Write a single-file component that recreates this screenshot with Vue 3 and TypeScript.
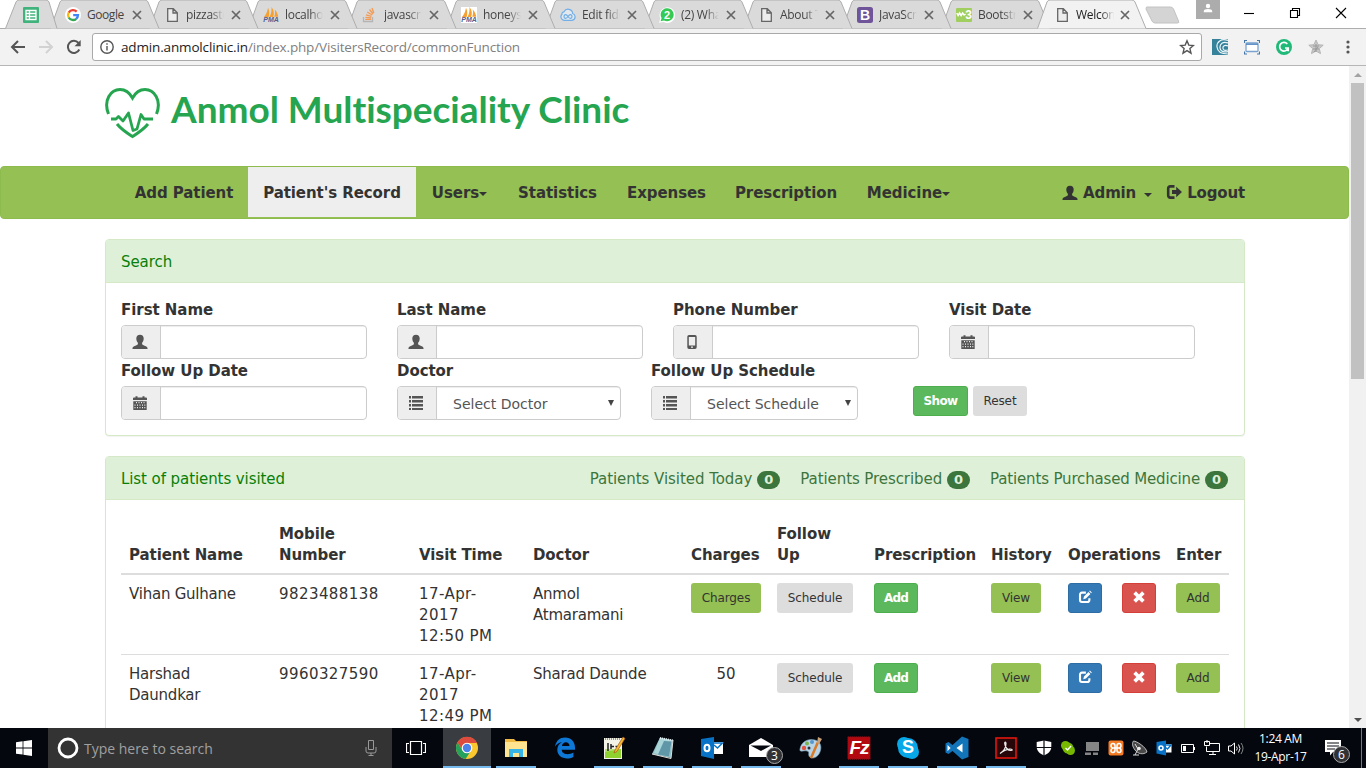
<script setup lang="ts">
interface Tab { icon: string; title: string; glyph?: string; kind?: 'pinned' | 'active' }
const tabs: Tab[] = [
  { icon: 'sheet', title: '', kind: 'pinned' },
  { icon: 'google', title: 'Google' },
  { icon: 'page', title: 'pizzasto' },
  { icon: 'pma', title: 'localhos', glyph: 'PMA' },
  { icon: 'stack', title: 'javascrip' },
  { icon: 'pmaw', title: 'honeysu', glyph: 'PMA' },
  { icon: 'cloud', title: 'Edit fidd' },
  { icon: 'whats', title: '(2) What', glyph: '2' },
  { icon: 'page', title: 'About Te' },
  { icon: 'boot', title: 'JavaScri', glyph: 'B' },
  { icon: 'w3', title: 'Bootstra', glyph: '3' },
  { icon: 'page', title: 'Welcome', kind: 'active' },
]
const extensions = ['swirl', 'frame', 'grammar', 'graystar', 'dots']

interface NavItem { label: string; key: string; caret?: boolean }
const nav: NavItem[] = [
  { label: 'Add Patient', key: 'add' },
  { label: "Patient's Record", key: 'record' },
  { label: 'Users', key: 'users', caret: true },
  { label: 'Statistics', key: 'stats' },
  { label: 'Expenses', key: 'expenses' },
  { label: 'Prescription', key: 'presc' },
  { label: 'Medicine', key: 'med', caret: true },
]

interface Field { label: string; icon: string; select?: string; key: string }
const fieldRows: Field[][] = [
  [
    { label: 'First Name', icon: 'user', key: 'first' },
    { label: 'Last Name', icon: 'user', key: 'last' },
    { label: 'Phone Number', icon: 'phone', key: 'phone' },
    { label: 'Visit Date', icon: 'calendar', key: 'visit' },
  ],
  [
    { label: 'Follow Up Date', icon: 'calendar', key: 'follow' },
    { label: 'Doctor', icon: 'list', select: 'Select Doctor', key: 'doctor' },
    { label: 'Follow Up Schedule', icon: 'list', select: 'Select Schedule', key: 'schedule' },
  ],
]
const counters = [
  { label: 'Patients Visited Today', value: 0 },
  { label: 'Patients Prescribed', value: 0 },
  { label: 'Patients Purchased Medicine', value: 0 },
]
const columns = [
  ['Patient Name'], ['Mobile', 'Number'], ['Visit Time'], ['Doctor'], ['Charges'],
  ['Follow', 'Up'], ['Prescription'], ['History'], ['Operations'], ['Enter'],
]
interface Row { name: string[]; mobile: string; time: string[]; doctor: string[]; charges: number | null }
const rows: Row[] = [
  { name: ['Vihan Gulhane'], mobile: '9823488138', time: ['17-Apr-', '2017', '12:50 PM'], doctor: ['Anmol', 'Atmaramani'], charges: null },
  { name: ['Harshad', 'Daundkar'], mobile: '9960327590', time: ['17-Apr-', '2017', '12:49 PM'], doctor: ['Sharad Daunde'], charges: 50 },
]
interface TaskApp { icon: string; state: string; glyph?: string }
const apps: TaskApp[] = [
  { icon: 'chrome', state: 'current' }, { icon: 'folder', state: 'open' }, { icon: 'edge', state: '' },
  { icon: 'npp', state: 'open' }, { icon: 'notepad', state: 'open' }, { icon: 'outlook', state: 'open' },
  { icon: 'mail', state: 'open' }, { icon: 'paint', state: '' }, { icon: 'filezilla', state: 'open', glyph: 'Fz' },
  { icon: 'skype', state: 'open', glyph: 'S' }, { icon: 'vscode', state: 'open' }, { icon: 'acrobat', state: 'open' },
]
const tray = ['shield', 'skypegreen', 'monitor', 'xampp', 'dish', 'outlooksm', 'battery', 'network', 'volume']
</script>

<template>
  <div class="screen">
    <svg class="defs" width="0" height="0">
      <symbol id="sheet" viewBox="0 0 16 16"><rect width="16" height="16" rx="1" fill="#3fb37b" /><path d="M3 3.500h10v9H3zM3 6.500h10M3 9.500h10M6.500 3.500v9" fill="none" stroke="#fff" stroke-width="1.300" /></symbol>
      <symbol id="google" viewBox="0 0 16 16"><circle cx="8" cy="8" r="8" fill="#fff" /><g fill="none" stroke-width="2.300"><path d="M11.700 4.600A5 5 0 0 0 3.700 5.600" stroke="#ea4335" /><path d="M3.700 5.500a5 5 0 0 0 0 5" stroke="#fbbc05" /><path d="M3.700 10.500a5 5 0 0 0 7.600 1.300" stroke="#34a853" /><path d="M8.200 8.100H13A5 5 0 0 1 11.200 11.800" stroke="#4285f4" /></g></symbol>
      <symbol id="page" viewBox="0 0 16 16"><path d="M3.700 1.700h5.600l4 4v8.600H3.700zM9 2v4h4" fill="#ededed" stroke="#666" stroke-width="1.300" /></symbol>
      <symbol id="sails" viewBox="0 0 16 16"><path d="M1 10C3.500 7 4.500 4 5 .8 6.500 4 6.600 7 5.600 10zM6.500 10C8.400 6.500 8.700 3.500 8.500 0 11 3.200 11.500 7 10 10zM11.200 9.800C12.300 7 12.300 5 11.700 2.500 14 5 15 7.500 15.200 9.800z" fill="#f5a030" /></symbol>
      <symbol id="pma" viewBox="0 0 16 16"><use href="#sails" /></symbol>
      <symbol id="pmaw" viewBox="0 0 16 16"><rect width="16" height="16" fill="#fff" /><use href="#sails" /></symbol>
      <symbol id="stack" viewBox="0 0 16 16"><path d="M1.500 10v4.500h9V10" fill="none" stroke="#b5b5b5" stroke-width="1.300" /><path d="M3.200 12.400h6M3.400 10.300l5.800.6M4 7.800l5.500 1.600M5.200 5l5 3M7.500 2.500l3.600 4.500M10 1l1.800 5" stroke="#f39a54" stroke-width="1.300" fill="none" /></symbol>
      <symbol id="cloud" viewBox="0 0 16 16"><path d="M4 13.300a3.500 3.500 0 0 1-2-6 2 2 0 0 1 2-2.500A4.600 4.600 0 0 1 12.700 6.500 3.500 3.500 0 0 1 12 13.300z" fill="#e4e8ec" stroke="#70afe8" stroke-width="1.200" /><path d="M8 9.500c-2-3-4-2-4 0s2 3 4 0 4-2 4 0-2 3-4 0z" fill="none" stroke="#70afe8" stroke-width="1.200" /></symbol>
      <symbol id="whats" viewBox="0 0 16 16"><path d="M0 15.800l1.300-4.300A7.800 7.800 0 1 1 4.600 15z" fill="#fff" /><path d="M1.600 14.300l1-3.200A6.500 6.500 0 1 1 5 13.400z" fill="#35ca55" /></symbol>
      <symbol id="boot" viewBox="0 0 16 16"><rect width="16" height="16" rx="2.500" fill="#6f5499" /></symbol>
      <symbol id="w3" viewBox="0 0 16 16"><rect y="1" width="16" height="14" rx="1" fill="#a1cf5f" /><path d="M.8 6l1.300 2.500L3.600 6l1.500 2.500L6.600 6l1.500 2 1.500-1" fill="none" stroke="#fff" stroke-width="1.500" /></symbol>
      <symbol id="swirl" viewBox="0 0 16 16"><rect width="16" height="16" fill="#35829a" /><path d="M16 1.500C9-1 4.500 3 5 8S10 15 16 15M16 4C11 2 7.500 5 8 9s5 4.500 8 3.500M16 7c-3-1.500-5.500 0-5 2.500s3 2 5 1.500" fill="none" stroke="#eef7fa" stroke-width="1.200" /></symbol>
      <symbol id="frame" viewBox="0 0 16 16"><rect x="2" y="4" width="12" height="8.500" rx="1" fill="#fff" stroke="#7aa3d0" stroke-width="1.300" /><path d="M2 5.200h12" stroke="#5c8fc4" stroke-width="1.500" /><path d="M.5 4V1.500H3M13 1.500h2.500V4M15.500 12.500V15H13M3 15H.5v-2.500" fill="none" stroke="#4777a8" stroke-width="1.200" /></symbol>
      <symbol id="grammar" viewBox="0 0 16 16"><circle cx="8" cy="8" r="8" fill="#21b978" /><path d="M11.300 5A4.300 4.300 0 1 0 12 9.200M12.200 12.200V9H9" fill="none" stroke="#fff" stroke-width="1.700" /></symbol>
      <symbol id="graystar" viewBox="0 0 16 16"><path d="M8 1l2.100 4.700 5.100.5-3.900 3.400 1.200 5L8 12l-4.500 2.600 1.200-5L.8 6.200l5.100-.5z" fill="#c8c8c8" stroke="#b5b5b5" /><path d="M5 7h6M8 5v8M5 10h6M6 13l4-5" stroke="#999" /></symbol>
      <symbol id="dots" viewBox="0 0 16 16"><circle cx="8" cy="3" r="1.600" fill="#555" /><circle cx="8" cy="8" r="1.600" fill="#555" /><circle cx="8" cy="13" r="1.600" fill="#555" /></symbol>

      <symbol id="user" viewBox="0 0 16 16"><path d="M8 .8c2.400 0 3.700 1.500 3.700 3.700 0 1.800-.7 3.500-1.600 4.200v1.400c0 .7 1 .9 2.500 1.600 1.800.8 2.900 1.400 2.900 2.300v1H.5v-1c0-.9 1.100-1.500 2.900-2.300C4.900 11 5.900 10.800 5.900 10.100V8.700C5 8 4.300 6.300 4.300 4.500 4.300 2.300 5.600.8 8 .8z" fill="currentColor" /></symbol>
      <symbol id="phone" viewBox="0 0 16 16"><path fill-rule="evenodd" d="M5 1h6a1.700 1.700 0 0 1 1.700 1.700v10.600A1.700 1.700 0 0 1 11 15H5a1.700 1.700 0 0 1-1.700-1.700V2.700A1.700 1.700 0 0 1 5 1zM4.800 3v8.500h6.400V3zM7 12.500v1.300h2v-1.300z" fill="currentColor" /></symbol>
      <symbol id="calendar" viewBox="0 0 16 16"><path fill-rule="evenodd" d="M2 2.500h1.500V1.300h2v1.200h5V1.300h2v1.200H14a1 1 0 0 1 1 1V5H1V3.500a1 1 0 0 1 1-1zM1.300 6.200h13.400V15H1.300zM4 7v1.300h1V7zm2.500 0v1.300h1V7zM9 7v1.300h1V7zm2.500 0v1.300h1V7zM2.500 9.500v1.300h1V9.500zM5 9.500v1.300h1V9.500zm2.500 0v1.300h1V9.500zm2.500 0v1.300h1V9.500zm2.300 0v1.300h1V9.500zM2.500 12v1.300h1V12zM5 12v1.300h1V12zm2.500 0v1.300h1V12zm2.500 0v1.300h1V12zm2.300 0v1.300h1V12z" fill="currentColor" /></symbol>
      <symbol id="list" viewBox="0 0 16 16"><path d="M1 1h2v2.500H1zM4 1h11v2.500H4zM1 5h2v2.500H1zM4 5h11v2.500H4zM1 9h2v2.500H1zM4 9h11v2.500H4zM1 13h2v2H1zM4 13h11v2H4z" fill="currentColor" /></symbol>
      <symbol id="logout" viewBox="0 0 16 16"><path d="M8.500 2.400H4.200A2 2 0 0 0 2.200 4.400v7.200a2 2 0 0 0 2 2h4.300" fill="none" stroke="currentColor" stroke-width="2.600" /><path d="M6 6h4.200V2.800L16 8l-5.800 5.200V10H6z" fill="currentColor" /></symbol>
      <symbol id="edit" viewBox="0 0 16 16"><path d="M9 3H4.500A2.200 2.200 0 0 0 2.300 5.200v6.300a2.200 2.200 0 0 0 2.200 2.200h6.300a2.200 2.200 0 0 0 2.200-2.200V9.500" fill="none" stroke="#fff" stroke-width="2.400" /><path d="M6 10.500l.8-3L12 2.300l2.200 2.200L9 9.700zM12.800 1.500l.8-.8 2.200 2.200-.8.8z" fill="#fff" /></symbol>
      <symbol id="remove" viewBox="0 0 16 16"><path d="M4.500 1.500L8 5l3.500-3.500 3 3L11 8l3.500 3.500-3 3L8 11l-3.500 3.500-3-3L5 8 1.500 4.500z" fill="#fff" /></symbol>

      <symbol id="chrome" viewBox="0 0 24 24"><circle cx="12" cy="12" r="11" fill="#fbc72e" /><path d="M2.500 6.400A11 11 0 0 1 22 7H12a5 5 0 0 0-4.300 7.500z" fill="#dd4b3e" /><path d="M2.500 6.400A11 11 0 0 0 10.500 22.900L15.500 15.500A5 5 0 0 1 7.600 14.400z" fill="#23a15d" /><circle cx="12" cy="12" r="5.300" fill="#fff" /><circle cx="12" cy="12" r="4.200" fill="#4a83ec" /></symbol>
      <symbol id="folder" viewBox="0 0 24 24"><path d="M1 3h9l2 2h11v16H1z" fill="#f0ba45" /><path d="M1 6h22v15H1z" fill="#fee391" /><path d="M5 21v-8h14v8h-4v-4H9v4z" fill="#36b4e5" /></symbol>
      <symbol id="edge" viewBox="0 0 24 24"><path d="M2 10.800C3 4.500 7 1.500 12 1.500c6.500 0 10 4.700 10 10v2.300H8.700c.2 5 7.300 5.500 11.700 2.700v4.400C13 24.500 4.500 21.500 4.300 14c-.1-4 2-6.600 4.500-7.800-1.500 0-4.500 1-6.800 4.600zM9 9.900h7.500C16.300 5 9.500 5.300 9 9.900z" fill="#0e78d6" /></symbol>
      <symbol id="npp" viewBox="0 0 24 24"><path d="M2 2h18v21H2z" fill="#f3f3e8" /><path d="M3 16l16-3v9H3z" fill="#8fd12f" /><path d="M3 13h16v9H3z" fill="#8fd12f" opacity=".6" /><path d="M3 3h16" stroke="#999" stroke-dasharray="1 1" stroke-width="2" /><path d="M6 7v8M9 8v5M9 10.500h3M13.500 10.500h2" stroke="#222" stroke-width="1.500" /><path d="M13 14l8-13 2 1.500-8 13-3 1.500z" fill="#f6b62e" stroke="#a65b18" stroke-width=".7" /></symbol>
      <symbol id="notepad" viewBox="0 0 24 24"><path d="M9 1.500l13 2.500-2 18L1 18z" fill="#8fbfc6" /><path d="M9 2l12 2.500-3 16L3 17z" fill="#a9d5d9" /><path d="M13 5l7.500.5-2.500 15L7 18.500z" fill="#5f97a8" /><path d="M9 2l13 2.500" stroke="#e0eff1" stroke-width="2" stroke-dasharray="1 1" /><path d="M1 18l19 4.500L22 4" fill="none" stroke="#dedede" /></symbol>
      <symbol id="outlook" viewBox="0 0 24 24"><path d="M10 6h13v12H10z" fill="#fff" /><path d="M1 3l13-2v22L1 20z" fill="#0872c6" /><path d="M14 7h8.500l-5 5-3.500-3" fill="none" stroke="#0872c6" stroke-width="1.500" /><ellipse cx="7" cy="12" rx="2.500" ry="3.300" fill="none" stroke="#fff" stroke-width="2" /></symbol>
      <symbol id="mail" viewBox="0 0 24 24"><path d="M0 9L12 2l12 7v12H0z" fill="#fff" /><path d="M1.500 9.500H22L12 15z" fill="#05080f" /><path d="M12 15l12 4v2H0z" fill="#fff" /></symbol>
      <symbol id="paint" viewBox="0 0 24 24"><path d="M2 13C3 6 10 2 17 4s7 9 4 14-9 5-10 2 1-4-2-5-8 2-7-2z" fill="#b8d4e6" stroke="#789db5" stroke-width=".6" /><circle cx="6" cy="12" r="2.200" fill="#df5340" /><circle cx="9" cy="7.500" r="2" fill="#7cb34c" /><circle cx="14" cy="6" r="2" fill="#5796ce" /><circle cx="11" cy="12" r="1.500" fill="#263038" /><path d="M13 22L20 6" stroke="#d97b26" stroke-width="2.500" /><path d="M19 7l1-6 4 2-3 5z" fill="#c9a177" /></symbol>
      <symbol id="filezilla" viewBox="0 0 24 24"><rect x=".8" y=".8" width="22.400" height="22.400" fill="#b40810" stroke="#75151a" stroke-dasharray="1 1" /></symbol>
      <symbol id="skype" viewBox="0 0 24 24"><circle cx="8" cy="8" r="7" fill="#08a8e8" /><circle cx="16" cy="16" r="7" fill="#08a8e8" /><circle cx="12" cy="12" r="10" fill="#08a8e8" /></symbol>
      <symbol id="vscode" viewBox="0 0 24 24"><path d="M17 .5L23.500 3v18L17 23.500l-9.500-8.500-4 3L.5 16.500v-9L3.500 6l4 3z" fill="#1274b9" /><path d="M2.500 9v6.200L5.600 12zM17.500 7.500v9L11.500 12z" fill="#fff" /></symbol>
      <symbol id="acrobat" viewBox="0 0 24 24"><rect x="2" y="2" width="20" height="20" fill="#260608" stroke="#e1170e" stroke-width="1.600" /><path d="M6 17.500c4-2.500 6-6.500 6-10 0-2-1.500-2-1.300 0 .3 4 3.300 7 6.300 7 2.500 0 1-2-2-1.300-3 .3-6 2-9 4.300z" fill="none" stroke="#eee" stroke-width="1.200" /></symbol>
      <symbol id="shield" viewBox="0 0 16 16"><path d="M8 .5L15.300 2v5c0 4-3.500 7-7.300 8.500C4.200 14 .7 11 .7 7V2z" fill="#fff" /><path d="M8 0v16M0 7.500h16" stroke="#070a11" stroke-width="1.200" /></symbol>
      <symbol id="skypegreen" viewBox="0 0 16 16"><circle cx="5.500" cy="5.500" r="4.500" fill="#77b800" /><circle cx="10.500" cy="10.500" r="4.500" fill="#77b800" /><circle cx="8" cy="8" r="5.500" fill="#77b800" /><path d="M5.500 8l2 2 3.500-4" fill="none" stroke="#fff" stroke-width="1.300" /></symbol>
      <symbol id="monitor" viewBox="0 0 16 16"><path d="M2 2h13v9H2zM1 12.500h6V15H1zM9 12.500h5V15H9z" fill="#858585" /></symbol>
      <symbol id="xampp" viewBox="0 0 16 16"><rect x=".5" y=".5" width="15" height="15" rx="2" fill="#f47b24" /><path d="M7 8H5.500C3.500 8 3 7 3 5.700S4 3.500 5 3.500 7 4.500 7 6v4c0 1.500-1 2.500-2.200 2.500S3 11.500 3 10.500 4 8 5.500 8h5C12 8 13 9 13 10.500s-1 2-2 2-2-1-2-2.500V6c0-1.500 1-2.500 2-2.500s2 .8 2 2.200S12 8 10.500 8" fill="none" stroke="#fff" stroke-width="1.500" /></symbol>
      <symbol id="dish" viewBox="0 0 16 16"><path d="M1.500 1c3 0 12.500 6 13.500 11-4 3-9 2-12-2S0 3 1.500 1z" fill="#494949" stroke="#ddd" stroke-width=".8" /><path d="M6 9L3 15M1 15h6M6 9l-3-5" stroke="#ddd" /><circle cx="7" cy="8.500" r="1.800" fill="#eee" /></symbol>
      <symbol id="outlooksm" viewBox="0 0 16 16"><path d="M7 4h8.500v8.500H7z" fill="#fff" /><path d="M.5 2L10 .5v15L.5 13.500z" fill="#0872c6" /><path d="M9 5h6l-3.500 4L9 7" fill="none" stroke="#0872c6" stroke-width="1.400" /><circle cx="5" cy="8" r="2" fill="none" stroke="#fff" stroke-width="1.500" /></symbol>
      <symbol id="battery" viewBox="0 0 16 16"><path d="M1.500 4.500h12v8h-12zM14.500 7v3" fill="none" stroke="#fff" /><path d="M3 6h3v5H3z" fill="#fff" /></symbol>
      <symbol id="network" viewBox="0 0 16 16"><path d="M5.500 3.500h10v8H2.500v-5M9 11.500v3M5 14.500h7M.5 1.500h5v4h-5zM3 3v-3" fill="none" stroke="#fff" /></symbol>
      <symbol id="volume" viewBox="0 0 16 16"><path d="M.5 6h2.500l3.500-3v11l-3.500-3H.5z" fill="none" stroke="#fff" /><path d="M8.500 6.500q1.500 2 0 4M10.500 4.500q3 4 0 8" fill="none" stroke="#eee" /><path d="M13 3q4 5 0 11" fill="none" stroke="#888" /></symbol>
    </svg>

    <header class="browser">
      <div class="tabstrip">
        <div v-for="(tab, i) in tabs" :key="i" class="tab" :class="tab.kind" :style="{ zIndex: tab.kind === 'active' ? 30 : 20 - i }">
          <svg v-if="tab.kind === 'pinned'" class="shape" width="53" height="29"><path d="M.5 28.500L11 2q1-2 3-2h27q2 0 3 2l8 26.500" fill="#dadada" stroke="#adadad" /></svg>
          <svg v-else class="shape" width="110" height="29"><path d="M.5 28.500L10 2q1-2 3-2h82q2 0 3 2l11 26.500" :fill="tab.kind === 'active' ? '#f2f2f2' : '#dadada'" stroke="#adadad" /></svg>
          <span class="favicon"><svg><use :href="'#' + tab.icon" /></svg><b v-if="tab.glyph" :class="['glyph', tab.icon]">{{ tab.glyph }}</b></span>
          <template v-if="tab.kind !== 'pinned'">
            <span class="title" :class="{ whole: tab.title === 'Google' }">{{ tab.title }}</span>
            <svg class="close" viewBox="0 0 10 10"><path d="M1 1l8 8M9 1L1 9" /></svg>
          </template>
        </div>
        <svg class="newtab" width="36" height="18"><path d="M1.500 1h24q2 0 3 2l5 12q1 2-1 2H10q-2 0-3-2L1 3z" fill="#d4d4d4" stroke="#c2c2c2" /></svg>
        <div class="wincontrols">
          <div class="profile"><svg viewBox="0 0 10 10"><circle cx="5" cy="3" r="2.200" /><path d="M.8 9.300V8Q1 6 5 6t4.200 2v1.300z" /></svg></div>
          <svg viewBox="0 0 12 12"><path d="M1 6.500h10" /></svg>
          <svg viewBox="0 0 12 12"><path d="M1.500 3.500h7v7h-7zM3.500 3.500v-2h7v7h-2" /></svg>
          <svg viewBox="0 0 12 12"><path d="M1 1l10 10M11 1L1 11" /></svg>
        </div>
      </div>
      <div class="toolbar">
        <svg class="navicon" viewBox="0 0 16 16"><path d="M15 8H2M8 2L2 8l6 6" /></svg>
        <svg class="navicon dim" viewBox="0 0 16 16"><path d="M1 8h13M8 2l6 6-6 6" /></svg>
        <svg class="navicon" viewBox="0 0 16 16"><path d="M13.300 10.500A6 6 0 1 1 12.500 4" /><path d="M14.700 1v6.200H8.500z" fill="#555" stroke="none" /></svg>
        <div class="omnibox">
          <svg class="info" viewBox="0 0 14 14"><circle cx="7" cy="7" r="6.200" /><path d="M7 6v4.500M7 3.200v1.600" /></svg>
          <span class="url"><b>admin.anmolclinic.in</b>/index.php/VisitersRecord/commonFunction</span>
          <svg class="star" viewBox="0 0 16 16"><path d="M8 1.800l1.800 4.300 4.600.4-3.500 3.100 1.100 4.600L8 11.700l-4 2.500 1.100-4.600-3.500-3.100 4.600-.4z" /></svg>
        </div>
        <div class="exts"><svg v-for="e in extensions" :key="e"><use :href="'#' + e" /></svg></div>
      </div>
    </header>

    <div class="viewport">
      <main class="page">
        <div class="brand">
          <svg width="55" height="51" viewBox="0 0 55 51"><g fill="none" stroke="#26a550" stroke-width="3"><path d="M3.500 26C-2 12 6 1.500 15 1.500c6 0 10 4 12.500 8.500C30 5.500 34 1.500 40 1.500 49 1.500 57 12 51.500 26" /><path d="M12 36c5 6 10 9 15.500 12.500C33 45 38 42 43 36" /><path d="M6 31h5l2.500-2.500 4.500 4.500 5.500-8 4.500 17.500 4-1.500 4-14.500 3 4.500h9" stroke-width="2.800" stroke-linejoin="round" /></g></svg>
          <span>Anmol Multispeciality Clinic</span>
        </div>

        <nav class="navbar">
          <a v-for="n in nav" :key="n.key" :class="['item', n.key]"><span>{{ n.label }}</span><i v-if="n.caret" class="caret"></i></a>
          <a class="right admin"><svg><use href="#user" /></svg><span>Admin</span><i class="caret"></i></a>
          <a class="right"><svg><use href="#logout" /></svg><span>Logout</span></a>
        </nav>

        <section class="panel search">
          <h3>Search</h3>
          <div class="body">
            <div v-for="(r, i) in fieldRows" :key="i" class="fieldrow">
              <div v-for="f in r" :key="f.key" :class="['field', f.key]">
                <label>{{ f.label }}</label>
                <div class="group">
                  <span class="addon"><svg><use :href="'#' + f.icon" /></svg></span>
                  <span class="control"><template v-if="f.select"><span>{{ f.select }}</span><i class="arrow"></i></template></span>
                </div>
              </div>
              <div v-if="i === 1" class="actions"><button class="btn green show">Show</button><button class="btn gray reset">Reset</button></div>
            </div>
          </div>
        </section>

        <section class="panel list">
          <h3><span>List of patients visited</span>
            <span class="counters"><span v-for="c in counters" :key="c.label" class="counter"><span>{{ c.label }}</span><b>{{ c.value }}</b></span></span>
          </h3>
          <div class="body">
            <table>
              <colgroup><col v-for="(c, i) in columns" :key="i" :class="'c' + i" /></colgroup>
              <thead><tr><th v-for="(c, i) in columns" :key="i"><div v-for="l in c" :key="l">{{ l }}</div></th></tr></thead>
              <tbody>
                <tr v-for="r in rows" :key="r.mobile">
                  <td class="words"><div v-for="l in r.name" :key="l">{{ l }}</div></td>
                  <td class="digits">{{ r.mobile }}</td>
                  <td class="digits"><div v-for="l in r.time" :key="l">{{ l }}</div></td>
                  <td class="words"><div v-for="l in r.doctor" :key="l">{{ l }}</div></td>
                  <td><button v-if="r.charges === null" class="btn lime charges">Charges</button><div v-else class="amount">{{ r.charges }}</div></td>
                  <td><button class="btn gray sched">Schedule</button></td>
                  <td><button class="btn green add">Add</button></td>
                  <td><button class="btn lime view">View</button></td>
                  <td><div class="ops"><button class="btn blue op"><svg><use href="#edit" /></svg></button><button class="btn red op"><svg><use href="#remove" /></svg></button></div></td>
                  <td><button class="btn lime add">Add</button></td>
                </tr>
              </tbody>
            </table>
          </div>
        </section>
      </main>
      <div class="scrollbar"><i class="up"></i><div class="thumb"></div><i class="down"></i></div>
    </div>

    <footer class="taskbar">
      <div class="start"><svg viewBox="0 0 16 16"><path d="M0 2.200L6.600 1.300v6.200H0zM7.400 1.200L16 0v7.500H7.400zM0 8.400h6.600v6.200L0 13.700zM7.400 8.400H16V16l-8.600-1.200z" fill="#fff" /></svg></div>
      <div class="cortana">
        <svg class="ring" viewBox="0 0 22 22"><circle cx="11" cy="11" r="9" /></svg>
        <span>Type here to search</span>
        <svg class="mic" viewBox="0 0 12 18"><path d="M3.500 1.500h5v9h-5zM1 8v4q0 2 2 2h6q2 0 2-2V8M6 14v2.500M3.500 16.500h5" /></svg>
      </div>
      <div class="taskview"><svg viewBox="0 0 20 14"><path d="M4.500.5h11v13h-11zM3 2.500H.5v9H3M17 2.500h2.500v9H17" /></svg></div>
      <div v-for="a in apps" :key="a.icon" class="app" :class="a.state"><svg><use :href="'#' + a.icon" /></svg><b v-if="a.glyph" :class="['glyph', a.icon]">{{ a.glyph }}</b><span v-if="a.icon === 'mail'" class="badge">3</span></div>
      <div class="tray"><svg v-for="t in tray" :key="t"><use :href="'#' + t" /></svg></div>
      <div class="clock"><span>1:24 AM</span><span>19-Apr-17</span></div>
      <div class="notify"><svg viewBox="0 0 16 16"><path d="M0 0h16v12H8l-3 3.500V12H0z" fill="#fff" /><path d="M2 3h12M2 6h12M2 9h8" stroke="#080a10" /></svg><span class="badge">6</span></div>
    </footer>
  </div>
</template>

<style>
html, body { margin: 0; overflow: hidden; }
</style>

<style scoped>
* { box-sizing: border-box; }
.screen { width: 1366px; height: 768px; display: flex; flex-direction: column; overflow: hidden; background: #fff; color: #333; font: 15px/21px "DejaVu Sans", Verdana, sans-serif; white-space: nowrap; }
.defs { position: absolute; }
svg { flex: none; display: block; }

.browser { height: 66px; flex: none; font-family: "Open Sans", "Noto Sans", sans-serif; }
.tabstrip { height: 29px; display: flex; padding-left: 5px; background: #fff; border-bottom: 1px solid #adadad; }
.tab { position: relative; width: 110px; height: 29px; margin-right: -11px; flex: none; display: flex; align-items: center; padding: 1px 0 0 15px; }
.tab.pinned { width: 53px; margin-right: -8px; padding-left: 18px; }
.tab.active { margin-left: -3px; padding-left: 17px; }
.shape { position: absolute; left: 0; top: 0; }
.favicon { width: 16px; height: 16px; position: relative; flex: none; }
.favicon svg { width: 16px; height: 16px; }
.glyph { position: absolute; inset: 0; display: flex; align-items: center; justify-content: center; color: #fff; font-family: "Liberation Sans", Arial, sans-serif; font-weight: 700; line-height: 1; }
.glyph.pma, .glyph.pmaw { align-items: flex-end; font-size: 7px; font-style: italic; color: #55608f; line-height: 6px; }
.glyph.whats { font-size: 11px; }
.glyph.boot { font-size: 14px; }
.glyph.w3 { font-size: 12px; justify-content: flex-end; }
.glyph.filezilla { font-size: 19px; font-style: italic; letter-spacing: -1px; }
.glyph.skype { font-size: 18px; }
.title { position: relative; width: 38px; margin-left: 6px; overflow: hidden; font-size: 12px; line-height: 20px; letter-spacing: -0.3px; color: #444; -webkit-mask-image: linear-gradient(90deg, #000 65%, transparent); mask-image: linear-gradient(90deg, #000 65%, transparent); }
.title.whole { letter-spacing: -0.45px; -webkit-mask-image: none; mask-image: none; }
.active .title { color: #222; }
.close { position: relative; width: 10px; height: 10px; margin-left: 7px; fill: none; stroke: #666; stroke-width: 1.7; }
.active .close { margin-left: 6px; }
.newtab { margin: 6px 0 0 9px; }
.wincontrols { margin-left: auto; display: flex; padding-right: 19px; height: 28px; }
.wincontrols > svg { width: 12px; height: 12px; margin: 7px 0 0 34px; fill: none; stroke: #000; stroke-width: 1.1; }
.wincontrols > .profile + svg { margin-left: 24px; }
.profile { width: 24px; height: 19px; margin-right: -1px; background: #acacac; display: flex; justify-content: center; padding-top: 3px; }
.wincontrols > .profile + svg { margin-left: 24px; }
.profile svg { width: 10px; height: 10px; fill: #fff; }
.toolbar { height: 37px; background: #f2f2f2; border-bottom: 1px solid #b6b6b6; display: flex; align-items: center; padding: 0 10px; }
.navicon { width: 16px; height: 16px; margin-right: 12px; fill: none; stroke: #555; stroke-width: 2; }
.navicon.dim { stroke: #d2d2d2; }
.omnibox { width: 1110px; height: 28px; margin-left: -2px; border: 1px solid #a9a9a9; border-radius: 3px; background: #fff; display: flex; align-items: center; padding: 0 7px; }
.info { width: 14px; height: 14px; fill: none; stroke: #555; stroke-width: 1.4; }
.url { margin-left: 7px; font-size: 13.5px; letter-spacing: -0.155px; color: #808080; }
.url b { color: #222; font-weight: 400; }
.star { width: 16px; height: 16px; margin-left: auto; margin-right: -1px; fill: none; stroke: #555; stroke-width: 1.4; }
.exts { display: flex; gap: 16px; margin-left: 10px; }
.exts svg { width: 16px; height: 16px; }

.viewport { height: 662px; flex: none; display: flex; overflow: hidden; }
.page { width: 1349px; height: 662px; overflow: hidden; }
.scrollbar { width: 17px; background: #f1f1f1; display: flex; flex-direction: column; align-items: center; padding: 7px 0 6px; }
.scrollbar i { border: 4px solid transparent; border-top: 0; border-bottom: 4px solid #a3a3a3; }
.scrollbar .down { border-bottom: 0; border-top: 4px solid #505050; margin-top: auto; }
.thumb { width: 13px; height: 296px; margin-top: 6px; background: #c1c1c1; }

.brand { height: 100px; display: flex; padding: 22px 0 0 105px; color: #26a550; font: 700 37px/44px Lato, sans-serif; font-variant-ligatures: none; letter-spacing: -0.02px; }
.brand span { margin: -1px 0 0 11px; }
.navbar { height: 53px; border: 1px solid #8ebb4e; border-radius: 4px; background: #94c054; display: flex; padding: 0 103px 0 119px; font-weight: 700; line-height: 51px; }
.navbar a { display: flex; align-items: center; justify-content: center; flex: none; }
.navbar .item { height: 50px; padding-top: 2px; letter-spacing: -0.07px; }
.add.item { width: 128px; }
.item.record { width: 168px; background: #eee; }
.item.users { width: 87px; }
.item.stats, .item.expenses { width: 109px; }
.item.presc { width: 130px; }
.item.med { width: 115px; }
.caret { border: 4px solid transparent; border-top-color: #333; border-bottom: 0; margin-top: 2px; }
.right svg { width: 16px; height: 16px; margin-right: 5px; }
.right { letter-spacing: -0.15px; height: 50px; padding-top: 2px; }
.right svg { margin-top: -2px; }
.navbar .admin { margin-left: auto; margin-right: 14px; padding-top: 3px; }

.admin .caret { margin-left: 8px; }

.panel { width: 1140px; margin: 20px 0 0 105px; border: 1px solid #d6e9c6; border-radius: 4px; background: #fff; box-shadow: 0 1px 1px rgba(0, 0, 0, .05); }
.panel h3 { margin: 0; height: 43px; padding: 0 16px 0 15px; border-bottom: 1px solid #d6e9c6; border-radius: 3px 3px 0 0; background: #dff0d8; color: #087f08; font: inherit; line-height: 44px; display: flex; justify-content: space-between; letter-spacing: -0.08px; }
.search { height: 197px; }
.search .body { padding: 16px 15px; }
.fieldrow { display: flex; height: 61px; gap: 30px; }
.field { width: 246px; }
.field.doctor { width: 224px; }
.field.schedule { width: 207px; }
.field label { display: block; font-weight: 700; height: 26px; line-height: 22px; letter-spacing: -0.05px; }
.group { display: flex; height: 34px; border: 1px solid #ccc; border-radius: 4px; overflow: hidden; }
.addon { width: 39px; background: #eee; border-right: 1px solid #ccc; color: #555; display: flex; align-items: center; justify-content: center; padding-right: 2px; }
.addon svg { width: 16px; height: 16px; }
.control { flex: 1; display: flex; align-items: center; justify-content: space-between; padding: 2px 6px 0 16px; color: #555; font-size: 14px; box-shadow: inset 0 1px 1px rgba(0, 0, 0, .075); }
.arrow { border: 3.5px solid transparent; border-top: 6px solid #444; border-bottom: 0; margin-top: -3px; }
.actions { display: flex; gap: 5px; padding: 26px 0 0 25px; }
.btn { height: 30px; padding: 0; border: 1px solid transparent; border-radius: 3px; color: #333; font: 12px/18px "DejaVu Sans", Verdana, sans-serif; letter-spacing: -0.1px; display: flex; align-items: center; justify-content: center; }
.green { background: #5cb85c; border-color: #4cae4c; color: #fff; font-weight: 700; letter-spacing: -0.75px; }
.green.show { letter-spacing: -0.6px; }
.gray { background: #ddd; }
.lime { background: #94c054; }
.blue { background: #337ab7; border-color: #2e6da4; }
.red { background: #d9534f; border-color: #d43f3a; }
.show { width: 55px; }
.reset { width: 54px; }
.charges { width: 70px; }
.sched { width: 76px; }
.btn.add { width: 44px; }
.view { width: 50px; }
.op { width: 34px; }
.op svg { width: 14px; height: 14px; margin: 0 1px 2px 0; }
.ops { display: flex; gap: 20px; }
.amount { width: 70px; text-align: center; }

.counters { display: flex; gap: 20px; color: #3c763d; }
.counter { display: flex; align-items: center; gap: 5px; padding-top: 1px; }
.counter:first-child > span { letter-spacing: -0.05px; }
.counter:last-child > span { letter-spacing: -0.16px; }
.counter b { width: 23px; height: 18px; border-radius: 9px; background: #3c763d; color: #dff0d8; font-size: 13px; line-height: 18px; text-align: center; margin-top: 2px; }
.list .body { padding: 15px; }
table { width: 1108px; table-layout: fixed; border-collapse: separate; border-spacing: 0; }
.c0 { width: 150px; } .c1 { width: 140px; } .c2 { width: 114px; } .c3 { width: 158px; } .c4 { width: 86px; }
.c5 { width: 97px; } .c6 { width: 117px; } .c7 { width: 77px; } .c8 { width: 108px; } .c9 { width: 61px; }
th { height: 60px; padding: 9px 0 7px 8px; text-align: left; vertical-align: bottom; border-bottom: 2px solid #ddd; letter-spacing: -0.08px; }
td { height: 80px; padding: 9px 0 7px 8px; vertical-align: top; border-bottom: 1px solid #ddd; }
td .btn { margin-top: -1px; }
.words { letter-spacing: -0.23px; }
.digits { letter-spacing: 0.43px; }

.taskbar { height: 40px; flex: none; background: #04070e; display: flex; color: #fff; font-family: "Open Sans", "Noto Sans", sans-serif; }
.start { width: 48px; display: flex; align-items: center; justify-content: center; }
.start svg { width: 16px; height: 16px; }
.cortana { width: 344px; background: #333; display: flex; align-items: center; padding: 0 15px 0 9px; color: #a0a0a0; font-size: 14px; }
.ring { width: 22px; height: 22px; margin-right: 5px; fill: none; stroke: #fff; stroke-width: 2.8; }
.mic { width: 12px; height: 18px; margin-left: auto; fill: none; stroke: #999; }
.taskview { width: 51px; display: flex; align-items: center; justify-content: center; padding-right: 3px; }
.taskview svg { width: 20px; height: 14px; fill: none; stroke: #fff; stroke-width: 1.2; }
.app { position: relative; width: 40px; margin-right: 9px; display: flex; align-items: center; justify-content: center; border-bottom: 2px solid transparent; padding-top: 1px; flex: none; }
.app svg { width: 24px; height: 24px; }
.app.open { border-color: #76b9ed; }
.app.current { width: 48px; margin-right: 5px; background: #393d42; border-color: #76b9ed; }
.badge { position: absolute; right: -2px; bottom: 2px; width: 17px; height: 17px; border: 1px solid #aaa; border-radius: 50%; background: #303236; font-size: 12px; line-height: 15px; text-align: center; }
.tray { display: flex; align-items: center; gap: 8px; margin-left: 1px; }
.tray svg { width: 16px; height: 16px; }
.clock { width: 73px; display: flex; flex-direction: column; align-items: center; font-size: 12px; line-height: 18px; letter-spacing: -0.35px; padding-top: 2px; }
.notify { position: relative; width: 45px; padding: 12px 0 0 8px; border-right: 1px solid #777; }
.notify svg { width: 16px; height: 16px; }
.notify .badge { right: 11px; bottom: 5px; }
</style>
